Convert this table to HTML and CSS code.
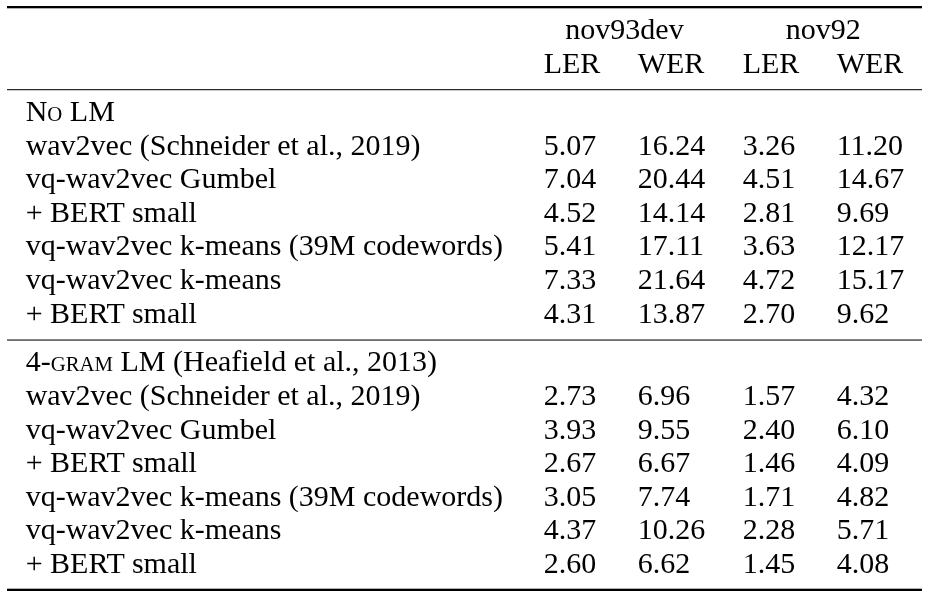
FILE: index.html
```html
<!DOCTYPE html>
<html lang="en">
<head>
<meta charset="utf-8">
<title>Results table</title>
<link rel="stylesheet" href="styles.css">
</head>
<body>
<div class="page">
<div class="table">
  <div class="section head">
    <div class="grid">
      <div class="cell"></div>
      <div class="cell span2 center">nov93dev</div>
      <div class="cell span2 center">nov92</div>
      <div class="cell"></div>
      <div class="cell">LER</div>
      <div class="cell">WER</div>
      <div class="cell">LER</div>
      <div class="cell">WER</div>
    </div>
  </div>
  <div class="section body">
    <div class="grid">
      <div class="cell full">N<span class="sc">o</span> LM</div>
      <div class="cell">wav2vec (Schneider et al., 2019)</div><div class="cell">5.07</div><div class="cell">16.24</div><div class="cell">3.26</div><div class="cell">11.20</div>
      <div class="cell">vq-wav2vec Gumbel</div><div class="cell">7.04</div><div class="cell">20.44</div><div class="cell">4.51</div><div class="cell">14.67</div>
      <div class="cell">+ BERT small</div><div class="cell">4.52</div><div class="cell">14.14</div><div class="cell">2.81</div><div class="cell">9.69</div>
      <div class="cell">vq-wav2vec k-means (39M codewords)</div><div class="cell">5.41</div><div class="cell">17.11</div><div class="cell">3.63</div><div class="cell">12.17</div>
      <div class="cell">vq-wav2vec k-means</div><div class="cell">7.33</div><div class="cell">21.64</div><div class="cell">4.72</div><div class="cell">15.17</div>
      <div class="cell">+ BERT small</div><div class="cell">4.31</div><div class="cell">13.87</div><div class="cell">2.70</div><div class="cell">9.62</div>
    </div>
  </div>
  <div class="section body last">
    <div class="grid">
      <div class="cell full">4-<span class="sc">gram</span> LM (Heafield et al., 2013)</div>
      <div class="cell">wav2vec (Schneider et al., 2019)</div><div class="cell">2.73</div><div class="cell">6.96</div><div class="cell">1.57</div><div class="cell">4.32</div>
      <div class="cell">vq-wav2vec Gumbel</div><div class="cell">3.93</div><div class="cell">9.55</div><div class="cell">2.40</div><div class="cell">6.10</div>
      <div class="cell">+ BERT small</div><div class="cell">2.67</div><div class="cell">6.67</div><div class="cell">1.46</div><div class="cell">4.09</div>
      <div class="cell">vq-wav2vec k-means (39M codewords)</div><div class="cell">3.05</div><div class="cell">7.74</div><div class="cell">1.71</div><div class="cell">4.82</div>
      <div class="cell">vq-wav2vec k-means</div><div class="cell">4.37</div><div class="cell">10.26</div><div class="cell">2.28</div><div class="cell">5.71</div>
      <div class="cell">+ BERT small</div><div class="cell">2.60</div><div class="cell">6.62</div><div class="cell">1.45</div><div class="cell">4.08</div>
    </div>
  </div>
</div>
</div>
</body>
</html>
```

FILE: styles.css
```css
html,
body {
  margin: 0;
  padding: 0;
  background: #ffffff;
}

.page {
  width: 936px;
  height: 596px;
  overflow: hidden;
  padding-top: 6px;
  box-sizing: border-box;
}

.table {
  width: 793.4px;
  margin: 0 0 0 7px;
  transform: scale(1.153846);
  transform-origin: 0 0;
  will-change: transform;
  border-top: 2px solid #000000;
  border-bottom: 2px solid #000000;
  font-family: "Liberation Serif", serif;
  font-size: 26px;
  line-height: 29.12px;
  color: #000000;
}

.section {
  padding-top: 3.9px;
  padding-bottom: 7.9px;
}

.section.head,
.section.body {
  border-bottom: 1px solid #1a1a1a;
}

.section.last {
  border-bottom: none;
}

.grid {
  display: grid;
  grid-template-columns: 448.93px 81.47px 91px 81.47px 90.57px;
  grid-auto-rows: 29.12px;
}

.cell {
  padding: 0 16.16px;
  white-space: nowrap;
}

.span2 {
  grid-column: span 2;
}

.full {
  grid-column: 1 / -1;
}

.center {
  text-align: center;
}

.sc {
  font-variant: small-caps;
}
```
